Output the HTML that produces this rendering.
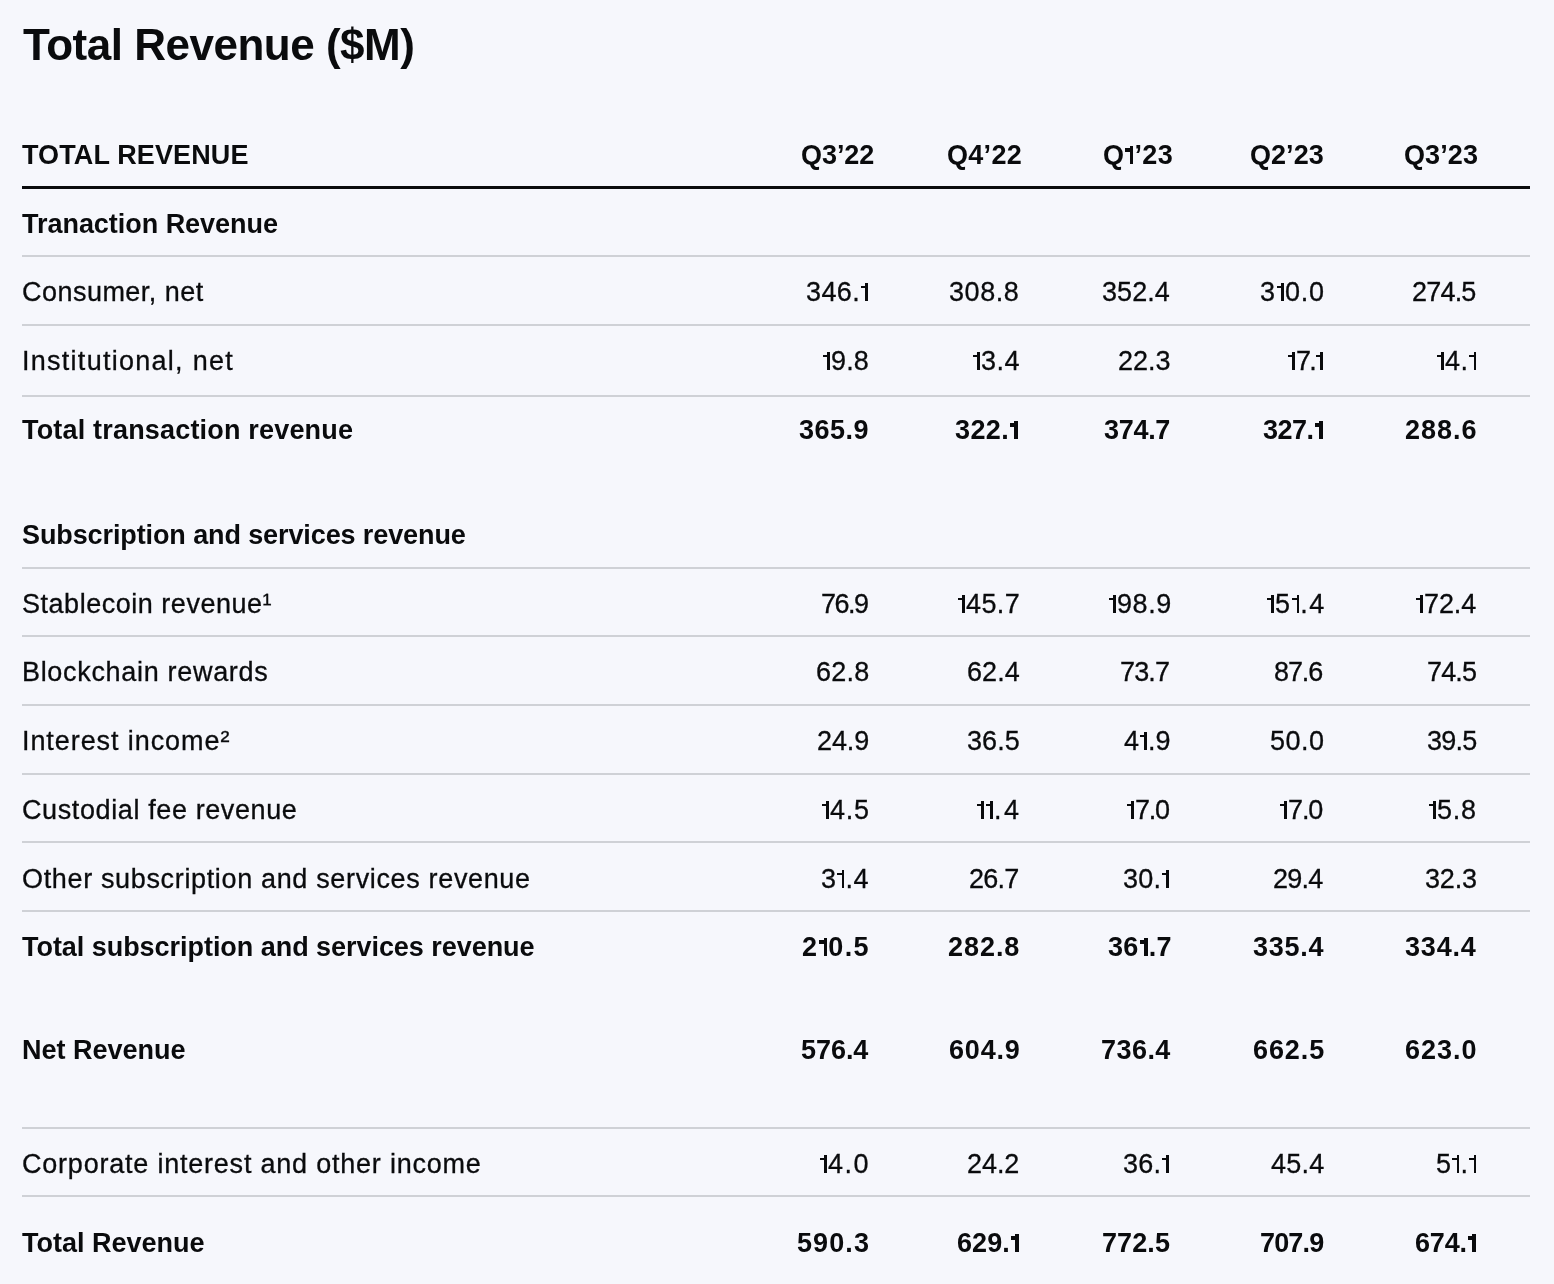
<!DOCTYPE html><html><head><meta charset="utf-8"><style>
html,body{margin:0;padding:0;}body{width:1554px;height:1284px;background:#f6f7fc;position:relative;overflow:hidden;font-family:"Liberation Sans",sans-serif;color:#0a0b0d;}
.t{position:absolute;white-space:nowrap;line-height:normal;will-change:transform;-webkit-text-stroke:0.3px currentColor;}.b{-webkit-text-stroke:0;}.b{font-weight:700;}.ln{position:absolute;left:22px;width:1508px;}
.o{display:inline-block;position:relative;width:9px;height:18.4px;overflow:hidden;color:transparent;-webkit-text-stroke:0;}.o::before{content:"";position:absolute;right:1px;top:0;width:2.8px;height:100%;background:#0a0b0d;}.o::after{content:"";position:absolute;right:3.5px;top:3px;width:4.5px;height:2.5px;background:#0a0b0d;}
.b .o{width:10px;}.b .o::before{width:3.8px;}.b .o::after{right:4.5px;top:2.8px;height:3.2px;width:4.5px;}
</style></head><body>
<div class="ln" style="top:186px;height:3px;background:#0a0b0d"></div>
<div class="ln" style="top:255px;height:2px;background:#cfd1d6"></div>
<div class="ln" style="top:324px;height:2px;background:#cfd1d6"></div>
<div class="ln" style="top:395px;height:2px;background:#cfd1d6"></div>
<div class="ln" style="top:567px;height:2px;background:#cfd1d6"></div>
<div class="ln" style="top:635px;height:2px;background:#cfd1d6"></div>
<div class="ln" style="top:704px;height:2px;background:#cfd1d6"></div>
<div class="ln" style="top:773px;height:2px;background:#cfd1d6"></div>
<div class="ln" style="top:841px;height:2px;background:#cfd1d6"></div>
<div class="ln" style="top:910px;height:2px;background:#cfd1d6"></div>
<div class="ln" style="top:1127px;height:2px;background:#cfd1d6"></div>
<div class="ln" style="top:1195px;height:2px;background:#cfd1d6"></div>
<div class="t b" style="left:23.00px;top:20.32px;font-size:44px;letter-spacing:-0.482px">Total Revenue ($M)</div>
<div class="t b" style="left:22.00px;top:139.50px;font-size:27px;letter-spacing:0.117px">TOTAL REVENUE</div>
<div class="t b" style="right:680.00px;top:139.50px;font-size:27px;letter-spacing:-0.050px">Q3’22</div>
<div class="t b" style="right:532.00px;top:139.50px;font-size:27px;letter-spacing:0.300px">Q4’22</div>
<div class="t b" style="right:381.00px;top:139.50px;font-size:27px;letter-spacing:0.400px">Q<span class="o">1</span>’23</div>
<div class="t b" style="right:230.60px;top:139.50px;font-size:27px;letter-spacing:0.050px">Q2’23</div>
<div class="t b" style="right:76.20px;top:139.50px;font-size:27px;letter-spacing:0.100px">Q3’23</div>
<div class="t b" style="left:22.00px;top:208.61px;font-size:27px;letter-spacing:-0.035px">Tranaction Revenue</div>
<div class="t" style="left:22.00px;top:277.00px;font-size:27px;letter-spacing:0.467px">Consumer, net</div>
<div class="t" style="right:685.00px;top:277.00px;font-size:27px;letter-spacing:0.400px">346.<span class="o">1</span></div>
<div class="t" style="right:534.50px;top:277.00px;font-size:27px;letter-spacing:0.550px">308.8</div>
<div class="t" style="right:384.50px;top:277.00px;font-size:27px;letter-spacing:0.050px">352.4</div>
<div class="t" style="right:229.00px;top:277.00px;font-size:27px;letter-spacing:0.850px">3<span class="o">1</span>0.0</div>
<div class="t" style="right:78.00px;top:277.00px;font-size:27px;letter-spacing:-0.800px">274.5</div>
<div class="t" style="left:22.00px;top:345.71px;font-size:27px;letter-spacing:1.271px">Institutional, net</div>
<div class="t" style="right:685.00px;top:345.71px;font-size:27px;letter-spacing:0.133px"><span class="o">1</span>9.8</div>
<div class="t" style="right:534.50px;top:345.71px;font-size:27px;letter-spacing:0.467px"><span class="o">1</span>3.4</div>
<div class="t" style="right:383.50px;top:345.71px;font-size:27px;letter-spacing:0.000px">22.3</div>
<div class="t" style="right:230.00px;top:345.71px;font-size:27px;letter-spacing:-1.667px"><span class="o">1</span>7.<span class="o">1</span></div>
<div class="t" style="right:77.00px;top:345.71px;font-size:27px;letter-spacing:0.467px"><span class="o">1</span>4.<span class="o">1</span></div>
<div class="t b" style="left:22.00px;top:414.61px;font-size:27px;letter-spacing:0.183px">Total transaction revenue</div>
<div class="t b" style="right:685.00px;top:414.61px;font-size:27px;letter-spacing:0.500px">365.9</div>
<div class="t b" style="right:534.50px;top:414.61px;font-size:27px;letter-spacing:0.400px">322.<span class="o">1</span></div>
<div class="t b" style="right:383.50px;top:414.61px;font-size:27px;letter-spacing:-0.300px">374.7</div>
<div class="t b" style="right:230.00px;top:414.61px;font-size:27px;letter-spacing:-0.500px">327.<span class="o">1</span></div>
<div class="t b" style="right:76.00px;top:414.61px;font-size:27px;letter-spacing:1.000px">288.6</div>
<div class="t b" style="left:22.00px;top:519.50px;font-size:27px;letter-spacing:-0.106px">Subscription and services revenue</div>
<div class="t" style="left:22.00px;top:588.50px;font-size:27px;letter-spacing:0.522px">Stablecoin revenue¹</div>
<div class="t" style="right:687.00px;top:588.50px;font-size:27px;letter-spacing:-1.533px">76.9</div>
<div class="t" style="right:533.50px;top:588.50px;font-size:27px;letter-spacing:0.400px"><span class="o">1</span>45.7</div>
<div class="t" style="right:382.50px;top:588.50px;font-size:27px;letter-spacing:0.600px"><span class="o">1</span>98.9</div>
<div class="t" style="right:229.00px;top:588.50px;font-size:27px;letter-spacing:1.300px"><span class="o">1</span>5<span class="o">1</span>.4</div>
<div class="t" style="right:78.00px;top:588.50px;font-size:27px;letter-spacing:-0.100px"><span class="o">1</span>72.4</div>
<div class="t" style="left:22.00px;top:656.90px;font-size:27px;letter-spacing:0.682px">Blockchain rewards</div>
<div class="t" style="right:685.00px;top:656.90px;font-size:27px;letter-spacing:0.200px">62.8</div>
<div class="t" style="right:534.50px;top:656.90px;font-size:27px;letter-spacing:0.067px">62.4</div>
<div class="t" style="right:384.50px;top:656.90px;font-size:27px;letter-spacing:-0.867px">73.7</div>
<div class="t" style="right:232.00px;top:656.90px;font-size:27px;letter-spacing:-1.133px">87.6</div>
<div class="t" style="right:78.00px;top:656.90px;font-size:27px;letter-spacing:-0.867px">74.5</div>
<div class="t" style="left:22.00px;top:725.90px;font-size:27px;letter-spacing:0.920px">Interest income²</div>
<div class="t" style="right:685.00px;top:725.90px;font-size:27px;letter-spacing:-0.133px">24.9</div>
<div class="t" style="right:534.50px;top:725.90px;font-size:27px;letter-spacing:0.067px">36.5</div>
<div class="t" style="right:383.50px;top:725.90px;font-size:27px;letter-spacing:-0.000px">4<span class="o">1</span>.9</div>
<div class="t" style="right:230.00px;top:725.90px;font-size:27px;letter-spacing:0.467px">50.0</div>
<div class="t" style="right:78.00px;top:725.90px;font-size:27px;letter-spacing:-0.800px">39.5</div>
<div class="t" style="left:22.00px;top:794.50px;font-size:27px;letter-spacing:0.610px">Custodial fee revenue</div>
<div class="t" style="right:684.00px;top:794.50px;font-size:27px;letter-spacing:0.800px"><span class="o">1</span>4.5</div>
<div class="t" style="right:532.50px;top:794.50px;font-size:27px;letter-spacing:2.467px"><span class="o">1</span><span class="o">1</span>.4</div>
<div class="t" style="right:385.50px;top:794.50px;font-size:27px;letter-spacing:-1.267px"><span class="o">1</span>7.0</div>
<div class="t" style="right:232.00px;top:794.50px;font-size:27px;letter-spacing:-1.133px"><span class="o">1</span>7.0</div>
<div class="t" style="right:77.00px;top:794.50px;font-size:27px;letter-spacing:0.733px"><span class="o">1</span>5.8</div>
<div class="t" style="left:22.00px;top:863.50px;font-size:27px;letter-spacing:0.653px">Other subscription and services revenue</div>
<div class="t" style="right:685.00px;top:863.50px;font-size:27px;letter-spacing:0.467px">3<span class="o">1</span>.4</div>
<div class="t" style="right:535.50px;top:863.50px;font-size:27px;letter-spacing:-0.733px">26.7</div>
<div class="t" style="right:383.50px;top:863.50px;font-size:27px;letter-spacing:0.200px">30.<span class="o">1</span></div>
<div class="t" style="right:232.00px;top:863.50px;font-size:27px;letter-spacing:-0.800px">29.4</div>
<div class="t" style="right:77.00px;top:863.50px;font-size:27px;letter-spacing:-0.200px">32.3</div>
<div class="t b" style="left:22.00px;top:931.71px;font-size:27px;letter-spacing:-0.042px">Total subscription and services revenue</div>
<div class="t b" style="right:684.00px;top:931.71px;font-size:27px;letter-spacing:1.300px">2<span class="o">1</span>0.5</div>
<div class="t b" style="right:533.50px;top:931.71px;font-size:27px;letter-spacing:0.950px">282.8</div>
<div class="t b" style="right:382.50px;top:931.71px;font-size:27px;letter-spacing:0.350px">36<span class="o">1</span>.7</div>
<div class="t b" style="right:230.00px;top:931.71px;font-size:27px;letter-spacing:0.750px">335.4</div>
<div class="t b" style="right:77.00px;top:931.71px;font-size:27px;letter-spacing:0.800px">334.4</div>
<div class="t b" style="left:22.00px;top:1035.31px;font-size:27px;letter-spacing:0.000px">Net Revenue</div>
<div class="t b" style="right:686.00px;top:1035.31px;font-size:27px;letter-spacing:-0.050px">576.4</div>
<div class="t b" style="right:533.50px;top:1035.31px;font-size:27px;letter-spacing:0.800px">604.9</div>
<div class="t b" style="right:383.50px;top:1035.31px;font-size:27px;letter-spacing:0.450px">736.4</div>
<div class="t b" style="right:229.00px;top:1035.31px;font-size:27px;letter-spacing:0.900px">662.5</div>
<div class="t b" style="right:76.00px;top:1035.31px;font-size:27px;letter-spacing:1.000px">623.0</div>
<div class="t" style="left:22.00px;top:1148.61px;font-size:27px;letter-spacing:0.782px">Corporate interest and other income</div>
<div class="t" style="right:684.00px;top:1148.61px;font-size:27px;letter-spacing:1.467px"><span class="o">1</span>4.0</div>
<div class="t" style="right:534.50px;top:1148.61px;font-size:27px;letter-spacing:-0.067px">24.2</div>
<div class="t" style="right:383.50px;top:1148.61px;font-size:27px;letter-spacing:0.200px">36.<span class="o">1</span></div>
<div class="t" style="right:230.00px;top:1148.61px;font-size:27px;letter-spacing:0.200px">45.4</div>
<div class="t" style="right:77.00px;top:1148.61px;font-size:27px;letter-spacing:0.467px">5<span class="o">1</span>.<span class="o">1</span></div>
<div class="t b" style="left:22.00px;top:1227.81px;font-size:27px;letter-spacing:0.000px">Total Revenue</div>
<div class="t b" style="right:684.00px;top:1227.81px;font-size:27px;letter-spacing:1.100px">590.3</div>
<div class="t b" style="right:534.50px;top:1227.81px;font-size:27px;letter-spacing:0.050px">629.<span class="o">1</span></div>
<div class="t b" style="right:383.50px;top:1227.81px;font-size:27px;letter-spacing:0.100px">772.5</div>
<div class="t b" style="right:231.00px;top:1227.81px;font-size:27px;letter-spacing:-0.850px">707.9</div>
<div class="t b" style="right:77.00px;top:1227.81px;font-size:27px;letter-spacing:-0.200px">674.<span class="o">1</span></div>
</body></html>
